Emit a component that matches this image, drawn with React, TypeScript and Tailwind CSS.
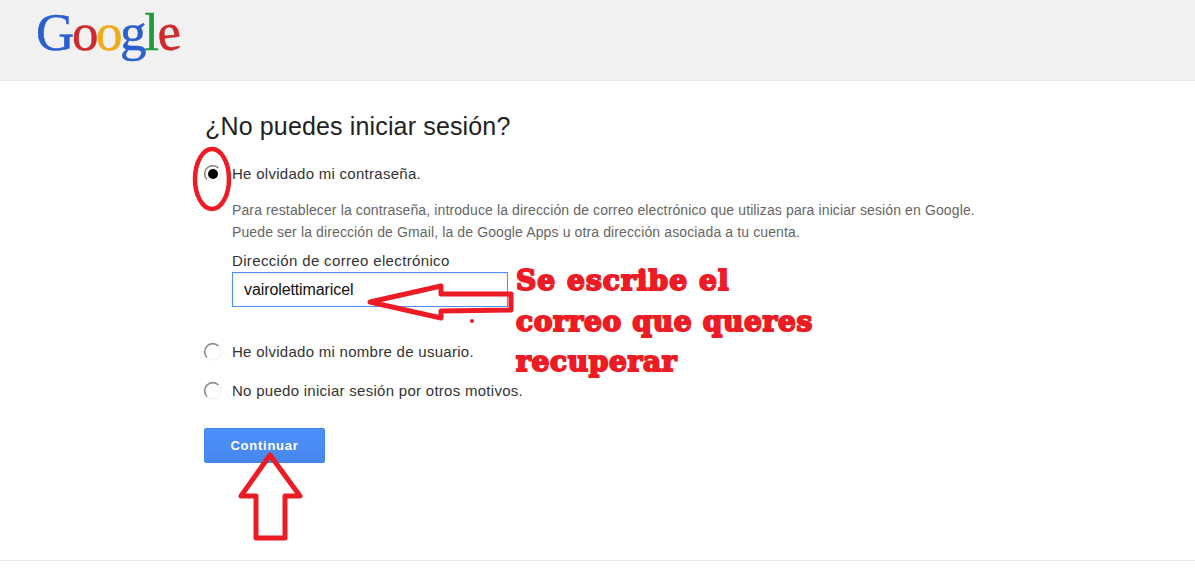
import React from "react";

// Radio as seen in the picture: dark arc on the upper left, faint ring elsewhere
const Radio = ({ checked = false }: { checked?: boolean }) => (
  <svg width="20" height="20" viewBox="0 0 20 20" className="shrink-0">
    <circle cx="10" cy="10" r="8" fill="none" stroke="#f0f0f0" strokeWidth="1" />
    <path d="M4 15.5A8 8 0 0 1 15.5 4" fill="none" stroke="#8a8a8a" strokeWidth="1.6" />
    {checked && <circle cx="10" cy="10" r="5" fill="#000" />}
  </svg>
);

const GoogleLogo = () => (
  <div className="flex font-['Liberation_Serif',serif] text-[53px] leading-none tracking-[-2.4px] [-webkit-text-stroke:0.5px]">
    <span className="text-[#2a5fd0]">G</span>
    <span className="text-[#d0292b]">o</span>
    <span className="text-[#f0ab1a]">o</span>
    <span className="text-[#2a5fd0]">g</span>
    <span className="text-[#1f9a3c]">l</span>
    <span className="text-[#d0292b] rotate-[-6deg]">e</span>
  </div>
);

const Option = ({ checked, children, className }: { checked?: boolean; children: React.ReactNode; className: string }) => (
  <label className={`flex h-[22px] items-center gap-[9px] text-[15px] tracking-[0.28px] ${className}`}>
    <span className="-ml-[1px]"><Radio checked={checked} /></span>
    <span>{children}</span>
  </label>
);

export default function App() {
  return (
    <div className="relative h-[571px] w-[1195px] overflow-hidden bg-white font-['Liberation_Sans',Arial,sans-serif] text-[#333]">
      <header className="h-[81px] border-b border-[#e5e5e5] bg-[#f1f1f1] pl-[36px] pt-[6px]">
        <GoogleLogo />
      </header>

      <main className="pl-[204px] pt-[29px]">
        <h1 className="ml-[1px] text-[25px] leading-[32px] text-[#222] tracking-[0.15px]">¿No puedes iniciar sesión?</h1>

        <Option checked className="mt-[21px]">He olvidado mi contraseña.</Option>

        <div className="ml-[28px] mt-[14px]">
          <p className="text-[14px] leading-[22px] text-[#666] tracking-[0.12px]">
            Para restablecer la contraseña, introduce la dirección de correo electrónico que utilizas para iniciar sesión en Google.
          </p>
          <p className="text-[14px] leading-[22px] text-[#666] tracking-[0.12px]">
            Puede ser la dirección de Gmail, la de Google Apps u otra dirección asociada a tu cuenta.
          </p>
          <div className="mt-[8px] text-[15px] leading-[20px] tracking-[0.35px]">Dirección de correo electrónico</div>
          <input
            readOnly
            value="vairolettimaricel"
            className="mt-[1px] block h-[35px] w-[276px] border border-[#4d90fe] px-[11px] text-[16px] tracking-[-0.1px] text-[#111] outline-none shadow-[inset_0_1px_2px_rgba(0,0,0,0.1)]"
          />
        </div>

        <Option className="mt-[34px]">He olvidado mi nombre de usuario.</Option>
        <Option className="mt-[17px]">No puedo iniciar sesión por otros motivos.</Option>

        <button className="mt-[26px] block h-[35px] w-[121px] rounded-[2px] border border-[#3f85f0] bg-gradient-to-b from-[#4d90fe] to-[#4787ed] text-[13px] font-bold tracking-[0.75px] text-white">
          Continuar
        </button>
      </main>

      <footer className="absolute bottom-0 left-0 h-[11px] w-full border-t border-[#e5e5e5]" />

      {/* hand drawn red marks over the page */}
      <svg className="pointer-events-none absolute left-0 top-0" width="1195" height="571" fill="none" stroke="#ed1c24" strokeLinejoin="round" strokeLinecap="round">
        <ellipse cx="212" cy="179" rx="17" ry="30" strokeWidth="4.5" />
        <path d="M370 303L441 287V295L511 295V311L441 312V319Z" strokeWidth="5" transform="translate(0 -1)" />
        <circle cx="472" cy="321" r="2" fill="#ed1c24" stroke="none" />
        <path d="M270 455L300 496H285V538H256V496H241Z" strokeWidth="5" />
      </svg>

      <div className="absolute left-[516px] top-[261px] font-['DejaVu_Serif',serif] text-[28px] font-bold leading-[40.5px] tracking-[0.7px] text-[#ed1c24] [-webkit-text-stroke:2px_#ed1c24]">
        <div className="tracking-[1.1px]">Se escribe el</div>
        <div>correo que queres</div>
        <div>recuperar</div>
      </div>
    </div>
  );
}
